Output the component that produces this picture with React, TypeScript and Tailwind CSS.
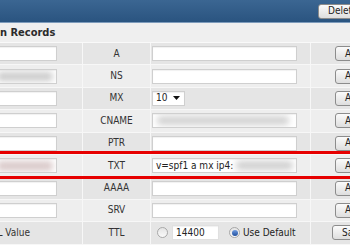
import React from 'react'

type Row = {
  label: string
  left?: 'blank' | 'blur' | 'pinkblur' | 'ttl'
  kind?: 'input' | 'blur' | 'mx' | 'txt' | 'ttl'
}

const ROWS: Row[] = [
  { label: 'A', left: 'blank', kind: 'input' },
  { label: 'NS', left: 'blur', kind: 'input' },
  { label: 'MX', left: 'blank', kind: 'mx' },
  { label: 'CNAME', left: 'blank', kind: 'blur' },
  { label: 'PTR', left: 'blank', kind: 'input' },
  { label: 'TXT', left: 'pinkblur', kind: 'txt' },
  { label: 'AAAA', left: 'blank', kind: 'input' },
  { label: 'SRV', left: 'blank', kind: 'input' },
  { label: 'TTL', left: 'ttl', kind: 'ttl' },
]

const inputBox = 'h-[15px] bg-white border border-[#cfcfcf] shadow-[inset_0_1px_1px_rgba(0,0,0,0.06)] flex items-center overflow-hidden'

function Btn({ label }: { label: string }) {
  return (
    <div className="h-[15px] px-[9px] flex items-center rounded-[3px] border border-[#8c8c8c] bg-gradient-to-b from-[#fbfbfb] to-[#dedede] text-[#222] whitespace-nowrap">
      {label}
    </div>
  )
}

function Radio({ checked }: { checked?: boolean }) {
  return (
    <div className="w-[11px] h-[11px] rounded-full border border-[#a8a8a8] bg-gradient-to-b from-[#e4e4e4] to-[#fafafa] flex items-center justify-center shrink-0">
      {checked && <div className="w-[6px] h-[6px] rounded-full bg-gradient-to-b from-[#6f9be0] to-[#1f4f9e]" />}
    </div>
  )
}

function LeftCell({ kind }: { kind: Row['left'] }) {
  if (kind === 'ttl') {
    return (
      <div className="w-[143px] shrink-0 flex items-center justify-end pr-[52px] text-[#333] border-r border-[#f7f7f7]">
        Default TTL Value
      </div>
    )
  }
  return (
    <div className="w-[143px] shrink-0 flex items-center justify-end pr-[25px] border-r border-[#f7f7f7]">
      <div className={`${inputBox} w-[110px] px-[3px]`}>
        {kind === 'blur' && <div className="ml-[46px] h-[9px] w-[56px] rounded-sm bg-[#cbcbcb] blur-[3px]" />}
        {kind === 'pinkblur' && <div className="ml-[46px] h-[10px] w-[58px] rounded-sm bg-[#dacaca] blur-[3px]" />}
      </div>
    </div>
  )
}

function MainCell({ kind }: { kind: Row['kind'] }) {
  if (kind === 'mx') {
    return (
      <div className="flex items-center">
        <div className={`${inputBox} w-[33px] pl-[3px] pr-[4px] justify-between text-[#222]`}>
          <span>10</span>
          <svg width="7" height="4" viewBox="0 0 7 4"><path d="M0 0h7L3.5 4z" fill="#111" /></svg>
        </div>
      </div>
    )
  }
  if (kind === 'ttl') {
    return (
      <div className="flex items-center pl-[5px]">
        <Radio />
        <div className={`${inputBox} w-[47px] ml-[4px] px-[3px] text-[#222] border-[#e0e0e0]`}>14400</div>
        <div className="ml-[10px]"><Radio checked /></div>
        <span className="ml-[3px] text-[#222]">Use Default</span>
      </div>
    )
  }
  return (
    <div className={`${inputBox} w-[145px] px-[3px] text-[#222]`}>
      {kind === 'blur' && <div className="ml-[1px] h-[9px] w-[132px] rounded-sm bg-[#d2d2d2] blur-[3px]" />}
      {kind === 'txt' && (
        <>
          <span className="whitespace-nowrap">v=spf1 a mx ip4:</span>
          <div className="ml-[3px] h-[9px] w-[60px] rounded-sm bg-[#d0d0d0] blur-[3px]" />
        </>
      )}
    </div>
  )
}

export default function App() {
  return (
    <div
      className="relative w-[350px] h-[250px] overflow-hidden bg-white text-[10px] leading-none"
      style={{ fontFamily: '"DejaVu Sans Condensed", "DejaVu Sans", Verdana, sans-serif' }}
    >
      <div className="-ml-[60px] w-[430px]">
        {/* Top bar */}
        <div className="h-[23px] bg-gradient-to-b from-[#3b6692] to-[#2a5480] border-b border-[#7d9bbb] flex items-center">
          <div className="ml-[378px]">
            <Btn label="Delete" />
          </div>
        </div>

        {/* Section title */}
        <div className="h-[20px] bg-[#efefef] border-b border-[#f9f9f9] flex items-center pl-[60px] font-bold text-[11px] text-[#2b2b2b]">
          n Records
        </div>

        {/* Records */}
        {ROWS.map((row, i) => (
          <div
            key={row.label}
            className={`flex h-[22.4px] border-b border-[#f7f7f7] ${i % 2 === 0 ? 'bg-[#e5e5e5]' : 'bg-[#eeeeee]'}`}
          >
            <LeftCell kind={row.left} />
            <div className="w-[68px] shrink-0 flex items-center justify-center text-[#333] border-r border-[#f7f7f7]">
              {row.label}
            </div>
            <div className="w-[160px] shrink-0 flex items-center pl-[1px] border-r border-[#f7f7f7]">
              <MainCell kind={row.kind} />
            </div>
            <div className={`flex items-center ${row.label === 'TTL' ? 'pl-[21px]' : 'pl-[24px]'}`}>
              <Btn label={row.label === 'TTL' ? 'Save' : 'Add'} />
            </div>
          </div>
        ))}
      </div>

      {/* red highlight around the TXT row */}
      <div className="absolute left-[-10px] right-[-10px] top-[151px] h-[28px] border-[3px] border-[#e60000]" />
    </div>
  )
}
